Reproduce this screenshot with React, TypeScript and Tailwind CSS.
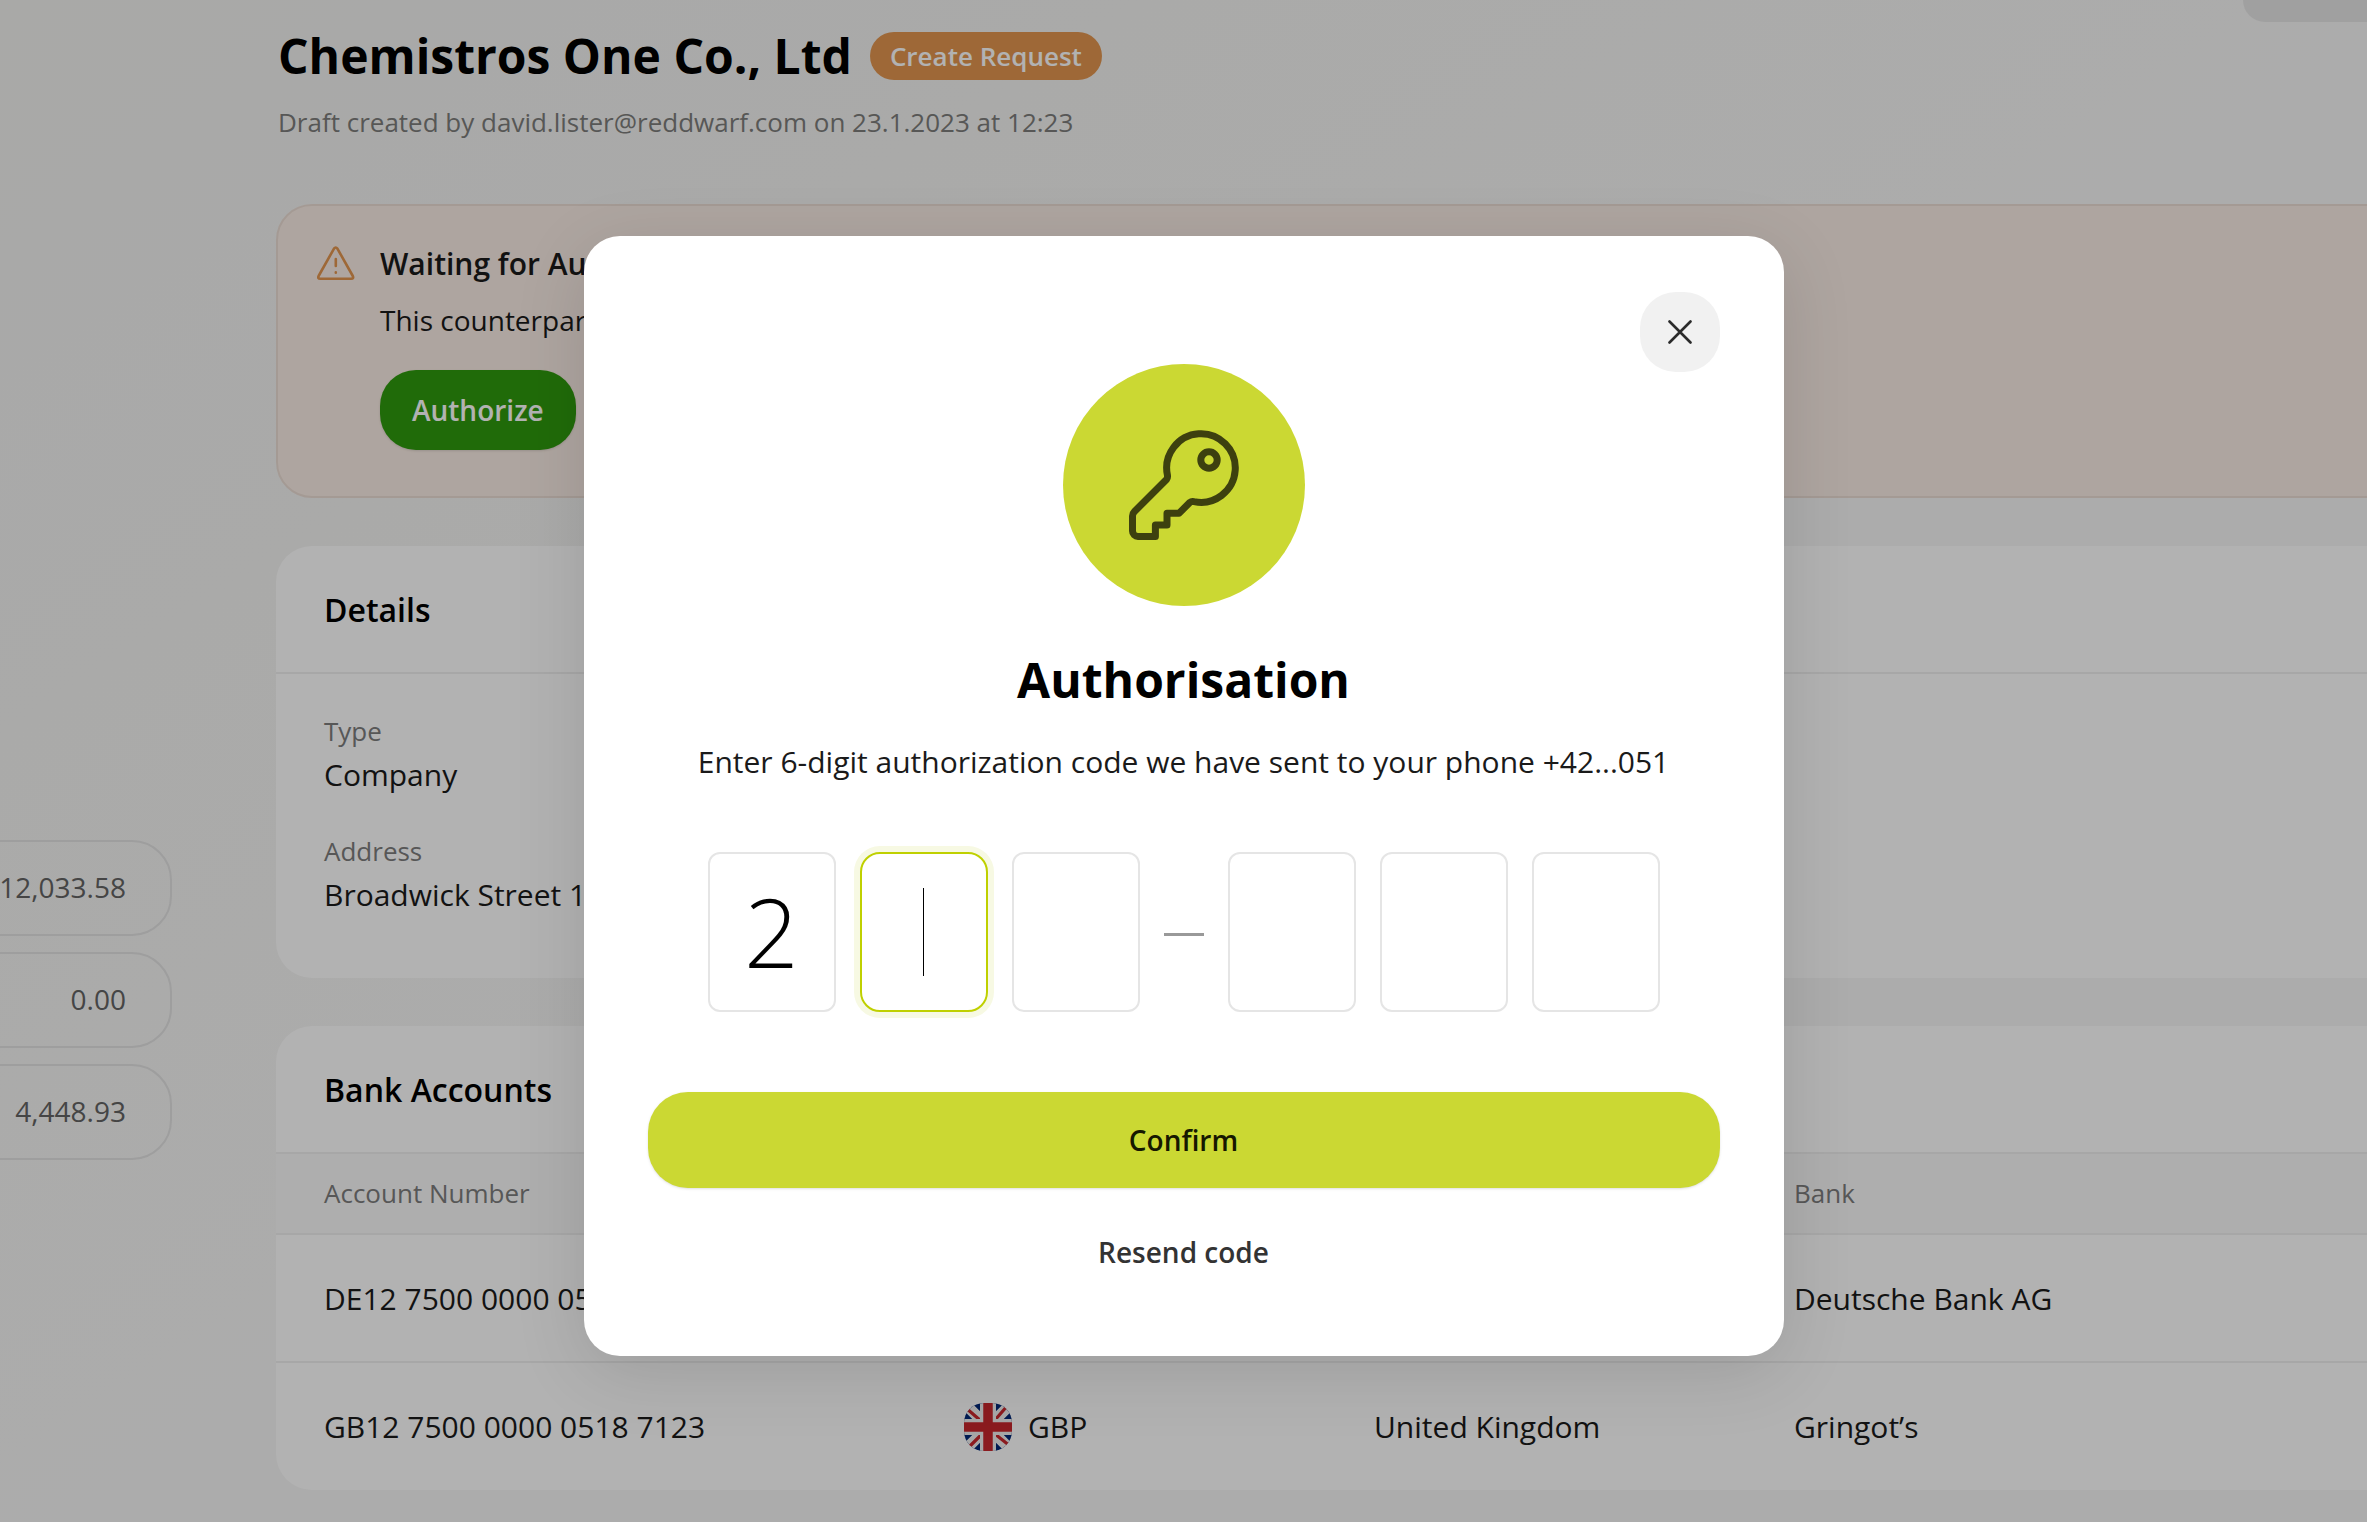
import { useState } from 'react'

// ── Types ──────────────────────────────────────────────────────────────────

interface BankAccount {
  number: string
  currency: string
  country: string
  bank: string
}

// ── Data ───────────────────────────────────────────────────────────────────

const BALANCES = ['12,033.58', '0.00', '4,448.93']

const DETAILS = [
  { label: 'Type', value: 'Company' },
  { label: 'Address', value: 'Broadwick Street 12, London' },
]

const ACCOUNTS: BankAccount[] = [
  { number: 'DE12 7500 0000 0518 7123', currency: 'EUR', country: 'Germany', bank: 'Deutsche Bank AG' },
  { number: 'GB12 7500 0000 0518 7123', currency: 'GBP', country: 'United Kingdom', bank: 'Gringot’s' },
]

// ── Icons ──────────────────────────────────────────────────────────────────

function KeyIcon() {
  return (
    <svg viewBox="0 0 110 110" className="size-[110px]" fill="none" stroke="#3d400f" strokeWidth="7" strokeLinejoin="round" aria-hidden="true">
      <path d="M38.4 45 A34.3 34.3 0 1 1 65 71.6 Q62.5 71 61 72.3 L50 83.3 L38 83.3 L38 95 L26.4 95 L26.4 106.5 L9 106.5 A5.5 5.5 0 0 1 3.5 101 L3.5 86 Q3.5 83.5 5.5 81.5 L37.5 49.5 Q38.9 48 38.4 45 Z" />
      <circle cx="80" cy="30" r="8.2" />
    </svg>
  )
}

function WarningIcon() {
  return (
    <svg viewBox="0 0 40 36" className="h-9 w-10" fill="none" stroke="#e29650" strokeWidth="2.6" strokeLinecap="round" strokeLinejoin="round" aria-hidden="true">
      <path d="M18 2.6 L2.6 30 Q1.4 32.6 4.2 32.8 L35.2 32.8 Q38 32.6 36.8 30 L21.4 2.6 Q19.7 0.4 18 2.6 Z" />
      <path d="M19.8 13 V20 M19.8 26.4 V26.8" />
    </svg>
  )
}

function CloseIcon() {
  return (
    <svg viewBox="0 0 24 24" className="size-6" stroke="#2b2b2b" strokeWidth="2.6" strokeLinecap="round" aria-hidden="true">
      <path d="M1.5 1.5 L22.5 22.5 M22.5 1.5 L1.5 22.5" />
    </svg>
  )
}

function Flag({ currency }: { currency: string }) {
  if (currency === 'EUR') {
    return (
      <svg viewBox="0 0 48 48" className="size-12 rounded-[20px]" aria-hidden="true">
        <rect width="48" height="48" fill="#003399" />
        <circle cx="24" cy="24" r="12" fill="none" stroke="#ffcc00" strokeWidth="3" strokeDasharray="3 3.3" />
      </svg>
    )
  }
  return (
    <svg viewBox="0 0 48 48" className="size-12 rounded-[20px]" aria-hidden="true">
      <rect width="48" height="48" fill="#002776" />
      <path d="M0 0 L48 48 M48 0 L0 48" stroke="#f0f0f0" strokeWidth="11" />
      <path d="M2 5 L17 18 M44 2 L31 17 M4 45 L17 32 M31 31 L46 43" stroke="#c8282d" strokeWidth="3.2" />
      <path d="M24 0 V48 M0 24 H48" stroke="#f0f0f0" strokeWidth="16" />
      <path d="M24 0 V48 M0 24 H48" stroke="#c8282d" strokeWidth="9.5" />
    </svg>
  )
}

// ── Page behind the dialog ─────────────────────────────────────────────────

function Balances() {
  return (
    <aside className="flex w-[172px] shrink-0 flex-col items-end gap-4 pt-[840px]">
      {BALANCES.map(value => (
        <div
          key={value}
          className="flex h-24 w-[400px] items-center justify-end rounded-[40px] border-2 border-[#e2e2e2] pr-11 pb-0.5 text-[28px] text-[#636363]"
        >
          {value}
        </div>
      ))}
    </aside>
  )
}

function PageHeader() {
  return (
    <header className="flex items-start justify-between">
      <div className="pt-6 pl-0.5">
        <div className="flex items-center gap-[18px]">
          <h1 className="text-[48px] leading-[64px] font-bold text-black">Chemistros One Co., Ltd</h1>
          <span className="rounded-[24px] bg-[#e29650] px-5 text-[26px] leading-[48px] font-semibold text-white">
            Create Request
          </span>
        </div>
        <p className="mt-4 text-[26px] leading-9 text-[#7d7d7b]">
          Draft created by david.lister@reddwarf.com on 23.1.2023 at 12:23
        </p>
      </div>
      <button type="button" aria-label="More actions" className="h-[22px] w-[172px] rounded-b-[36px] bg-[#e6e6e6]" />
    </header>
  )
}

function AuthorizationAlert() {
  return (
    <section className="mt-16 flex gap-6 rounded-[36px] border-2 border-[#ebddd5] bg-[#faede5] px-[38px] pt-[38px] pb-[46px]">
      <div className="pt-0.5">
        <WarningIcon />
      </div>
      <div>
        <h2 className="text-[30px] leading-10 font-semibold text-[#1a1a1a]">Waiting for Authorization</h2>
        <p className="mt-4 text-[28px] leading-10 text-[#1a1a1a]">This counterparty is waiting for your authorization.</p>
        <button type="button" className="mt-[30px] h-20 rounded-[36px] bg-[#2f9a0d] px-8 text-[28px] font-semibold text-white shadow-sm">
          Authorize
        </button>
      </div>
    </section>
  )
}

function DetailsCard() {
  return (
    <section className="mt-12 rounded-[36px] bg-white pb-12">
      <h2 className="border-b-2 border-[#f0f0f0] px-12 pt-[42px] pb-10 text-[32px] leading-11 font-semibold text-black">Details</h2>
      <dl className="flex flex-col gap-9 px-12 pt-[39px] pb-[13px]">
        {DETAILS.map(d => (
          <div key={d.label}>
            <dt className="text-[26px] leading-9 text-[#7d7d7d]">{d.label}</dt>
            <dd className="mt-1 text-[30px] leading-11 text-[#1a1a1a]">{d.value}</dd>
          </div>
        ))}
      </dl>
    </section>
  )
}

function BankAccountsCard() {
  return (
    <section className="mt-12 overflow-hidden rounded-[36px] bg-white">
      <h2 className="border-b-2 border-[#f0f0f0] px-12 pt-[42px] pb-10 text-[32px] leading-11 font-semibold text-black">
        Bank Accounts
      </h2>
      <table className="w-full table-fixed text-left">
        <colgroup>
          <col className="w-[688px]" />
          <col className="w-[410px]" />
          <col className="w-[420px]" />
          <col />
        </colgroup>
        <thead>
          <tr className="h-20 border-b-2 border-[#f0f0f0] bg-[#fafafa] text-[26px] text-[#7d7d7d]">
            <th className="pl-12 font-normal">Account Number</th>
            <th className="font-normal">Currency</th>
            <th className="font-normal">Country</th>
            <th className="font-normal">Bank</th>
          </tr>
        </thead>
        <tbody className="text-[30px] text-[#1a1a1a]">
          {ACCOUNTS.map(a => (
            <tr key={a.number} className="h-32 border-b-2 border-[#f0f0f0] last:border-0">
              <td className="pl-12">{a.number}</td>
              <td>
                <div className="flex items-center gap-4">
                  <Flag currency={a.currency} />
                  {a.currency}
                </div>
              </td>
              <td>{a.country}</td>
              <td>{a.bank}</td>
            </tr>
          ))}
        </tbody>
      </table>
    </section>
  )
}

// ── Dialog ─────────────────────────────────────────────────────────────────

function CodeInput({
  index,
  value,
  active,
  onChange,
}: {
  index: number
  value: string
  active: boolean
  onChange: (value: string) => void
}) {
  return (
    <div className="relative">
      <input
        type="text"
        inputMode="numeric"
        maxLength={1}
        aria-label={`Digit ${index + 1}`}
        value={value}
        onChange={e => onChange(e.target.value)}
        className={`block h-40 w-32 border-2 bg-white pb-1 text-center text-[96px] font-light text-black caret-transparent outline-none ${
          active ? 'rounded-[20px] border-[#bfd000] ring-6 ring-[#f7f9e3]' : 'rounded-xl border-[#e5e5e5]'
        }`}
      />
      {active && <span className="absolute inset-0 m-auto h-[88px] w-px bg-black" />}
    </div>
  )
}

function AuthorisationDialog() {
  const [code, setCode] = useState(['2', '', '', '', '', ''])
  const activeIdx = code.indexOf('')

  function update(idx: number, value: string) {
    setCode(c => c.map((digit, i) => (i === idx ? value : digit)))
  }

  function renderInputs(from: number, to: number) {
    return code.slice(from, to).map((digit, i) => (
      <CodeInput
        key={from + i}
        index={from + i}
        value={digit}
        active={from + i === activeIdx}
        onChange={value => update(from + i, value)}
      />
    ))
  }

  return (
    <div
      role="dialog"
      aria-modal="true"
      aria-labelledby="dialog-title"
      className="flex w-[1200px] flex-col items-center rounded-[36px] bg-white px-16 py-14 shadow-[0_16px_72px_rgba(0,0,0,0.12)]"
    >
      <button
        type="button"
        aria-label="Close"
        className="flex size-20 items-center justify-center self-end rounded-[36px] bg-[#f1f1f1]"
      >
        <CloseIcon />
      </button>
      <div className="-mt-2 flex size-[242px] items-center justify-center rounded-full bg-[#cbd833]">
        <KeyIcon />
      </div>
      <h2 id="dialog-title" className="mt-[42px] text-[48px] leading-[64px] font-bold text-black">
        Authorisation
      </h2>
      <p className="mt-[30px] text-[30px] leading-10 text-[#1a1a1a]">
        Enter 6-digit authorization code we have sent to your phone +42...051
      </p>
      <div className="mt-[70px] flex items-center gap-6">
        {renderInputs(0, 3)}
        <span className="mt-1 h-[3px] w-10 bg-[#999]" />
        {renderInputs(3, 6)}
      </div>
      <button
        type="button"
        className="mt-20 h-24 w-full rounded-[40px] bg-[#cbd833] text-[28px] font-semibold text-[#161800] shadow-sm"
      >
        Confirm
      </button>
      <button type="button" className="mt-4 h-24 w-full rounded-[40px] text-[28px] font-semibold text-[#333]">
        Resend code
      </button>
    </div>
  )
}

// ── App ────────────────────────────────────────────────────────────────────

export default function App() {
  return (
    <div className="relative min-h-screen overflow-hidden bg-linear-to-br from-[#f2f2f0] to-[#f7f7f7] to-60% font-['Open_Sans',sans-serif]">
      <div className="flex min-h-screen">
        <Balances />
        <main className="-mr-12 ml-[104px] min-w-0 flex-1 pb-8">
          <PageHeader />
          <AuthorizationAlert />
          <DetailsCard />
          <BankAccountsCard />
        </main>
      </div>
      <div className="absolute inset-0 flex items-start justify-center bg-black/30 pt-[236px]">
        <AuthorisationDialog />
      </div>
    </div>
  )
}
